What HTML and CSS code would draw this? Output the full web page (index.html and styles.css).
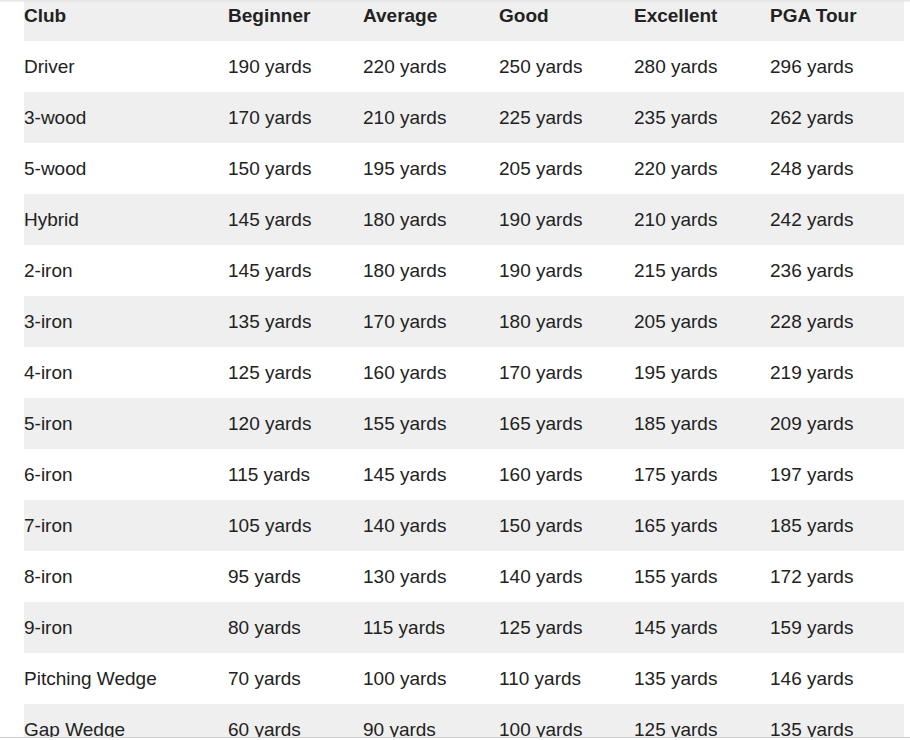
FILE: index.html
```html
<!DOCTYPE html>
<html>
<head>
<meta charset="utf-8">
<link rel="stylesheet" href="styles.css">
</head>
<body>
<div class="frame">
<table class="dist">
<thead>
<tr><th>Club</th><th>Beginner</th><th>Average</th><th>Good</th><th>Excellent</th><th>PGA Tour</th></tr>
</thead>
<tbody>
<tr><td>Driver</td><td>190 yards</td><td>220 yards</td><td>250 yards</td><td>280 yards</td><td>296 yards</td></tr>
<tr><td>3-wood</td><td>170 yards</td><td>210 yards</td><td>225 yards</td><td>235 yards</td><td>262 yards</td></tr>
<tr><td>5-wood</td><td>150 yards</td><td>195 yards</td><td>205 yards</td><td>220 yards</td><td>248 yards</td></tr>
<tr><td>Hybrid</td><td>145 yards</td><td>180 yards</td><td>190 yards</td><td>210 yards</td><td>242 yards</td></tr>
<tr><td>2-iron</td><td>145 yards</td><td>180 yards</td><td>190 yards</td><td>215 yards</td><td>236 yards</td></tr>
<tr><td>3-iron</td><td>135 yards</td><td>170 yards</td><td>180 yards</td><td>205 yards</td><td>228 yards</td></tr>
<tr><td>4-iron</td><td>125 yards</td><td>160 yards</td><td>170 yards</td><td>195 yards</td><td>219 yards</td></tr>
<tr><td>5-iron</td><td>120 yards</td><td>155 yards</td><td>165 yards</td><td>185 yards</td><td>209 yards</td></tr>
<tr><td>6-iron</td><td>115 yards</td><td>145 yards</td><td>160 yards</td><td>175 yards</td><td>197 yards</td></tr>
<tr><td>7-iron</td><td>105 yards</td><td>140 yards</td><td>150 yards</td><td>165 yards</td><td>185 yards</td></tr>
<tr><td>8-iron</td><td>95 yards</td><td>130 yards</td><td>140 yards</td><td>155 yards</td><td>172 yards</td></tr>
<tr><td>9-iron</td><td>80 yards</td><td>115 yards</td><td>125 yards</td><td>145 yards</td><td>159 yards</td></tr>
<tr><td>Pitching Wedge</td><td>70 yards</td><td>100 yards</td><td>110 yards</td><td>135 yards</td><td>146 yards</td></tr>
<tr><td>Gap Wedge</td><td>60 yards</td><td>90 yards</td><td>100 yards</td><td>125 yards</td><td>135 yards</td></tr>
</tbody>
</table>
</div>
<div class="edge-top"></div>
<div class="edge-bottom"></div>
</body>
</html>
```
FILE: styles.css
```css
html, body {
  margin: 0;
  padding: 0;
  background: #fff;
  overflow: hidden;
  height: 740px;
}
body {
  font-family: "Liberation Sans", Arial, Helvetica, sans-serif;
  font-size: 19px;
  color: #222;
}
.frame {
  padding-left: 24px;
  margin-top: -10px;
}
.dist {
  width: 880px;
  border-collapse: collapse;
  table-layout: fixed;
}
.dist th:nth-child(1), .dist td:nth-child(1) { width: 204px; }
.dist th:nth-child(2) { width: 135px; }
.dist th:nth-child(3) { width: 136px; }
.dist th:nth-child(4) { width: 135px; }
.dist th:nth-child(5) { width: 136px; }
.dist th, .dist td {
  height: 51px;
  padding: 0;
  text-align: left;
  vertical-align: middle;
  line-height: 22px;
}
.dist th {
  font-weight: bold;
  color: #222;
}
.dist thead tr { background: #efefef; }
.dist tbody tr:nth-child(even) { background: #efefef; }
.edge-top {
  position: absolute;
  left: 0; top: 0;
  width: 100%;
  height: 3px;
  background: linear-gradient(#e2e2e2, rgba(255,255,255,0));
}
.edge-bottom {
  position: absolute;
  left: 0; top: 737px;
  width: 100%;
  height: 3px;
  background: #fff;
  border-top: 1px solid #cfcfcf;
}
```
